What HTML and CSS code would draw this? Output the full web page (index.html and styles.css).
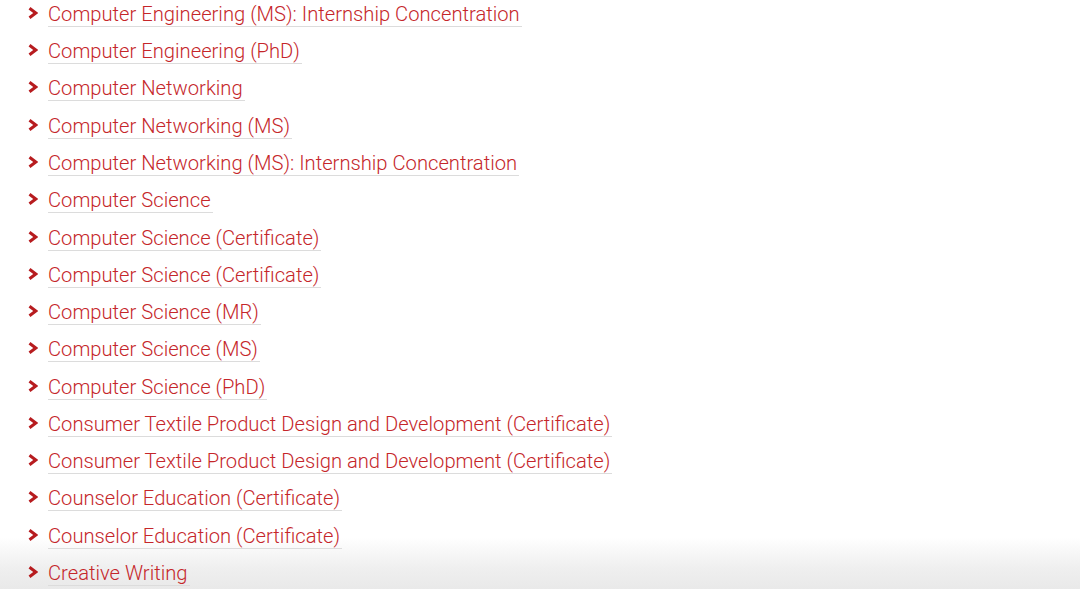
FILE: index.html
```html
<!DOCTYPE html>
<html lang="en">
<head>
    <meta charset="UTF-8">
    <title>Programs</title>
    <link rel="stylesheet" href="styles.css">
</head>
<body>

<ul class="program-list">
    <li><svg class="chevron" viewBox="0 0 10 12"><polyline points="1.5,1.2 7.8,6 1.5,10.8"/></svg><a href="#">Computer Engineering (MS): Internship Concentration</a></li>
    <li><svg class="chevron" viewBox="0 0 10 12"><polyline points="1.5,1.2 7.8,6 1.5,10.8"/></svg><a href="#">Computer Engineering (PhD)</a></li>
    <li><svg class="chevron" viewBox="0 0 10 12"><polyline points="1.5,1.2 7.8,6 1.5,10.8"/></svg><a href="#">Computer Networking</a></li>
    <li><svg class="chevron" viewBox="0 0 10 12"><polyline points="1.5,1.2 7.8,6 1.5,10.8"/></svg><a href="#">Computer Networking (MS)</a></li>
    <li><svg class="chevron" viewBox="0 0 10 12"><polyline points="1.5,1.2 7.8,6 1.5,10.8"/></svg><a href="#">Computer Networking (MS): Internship Concentration</a></li>
    <li><svg class="chevron" viewBox="0 0 10 12"><polyline points="1.5,1.2 7.8,6 1.5,10.8"/></svg><a href="#">Computer Science</a></li>
    <li><svg class="chevron" viewBox="0 0 10 12"><polyline points="1.5,1.2 7.8,6 1.5,10.8"/></svg><a href="#">Computer Science (Certificate)</a></li>
    <li><svg class="chevron" viewBox="0 0 10 12"><polyline points="1.5,1.2 7.8,6 1.5,10.8"/></svg><a href="#">Computer Science (Certificate)</a></li>
    <li><svg class="chevron" viewBox="0 0 10 12"><polyline points="1.5,1.2 7.8,6 1.5,10.8"/></svg><a href="#">Computer Science (MR)</a></li>
    <li><svg class="chevron" viewBox="0 0 10 12"><polyline points="1.5,1.2 7.8,6 1.5,10.8"/></svg><a href="#">Computer Science (MS)</a></li>
    <li><svg class="chevron" viewBox="0 0 10 12"><polyline points="1.5,1.2 7.8,6 1.5,10.8"/></svg><a href="#">Computer Science (PhD)</a></li>
    <li><svg class="chevron" viewBox="0 0 10 12"><polyline points="1.5,1.2 7.8,6 1.5,10.8"/></svg><a href="#">Consumer Textile Product Design and Development (Certificate)</a></li>
    <li><svg class="chevron" viewBox="0 0 10 12"><polyline points="1.5,1.2 7.8,6 1.5,10.8"/></svg><a href="#">Consumer Textile Product Design and Development (Certificate)</a></li>
    <li><svg class="chevron" viewBox="0 0 10 12"><polyline points="1.5,1.2 7.8,6 1.5,10.8"/></svg><a href="#">Counselor Education (Certificate)</a></li>
    <li><svg class="chevron" viewBox="0 0 10 12"><polyline points="1.5,1.2 7.8,6 1.5,10.8"/></svg><a href="#">Counselor Education (Certificate)</a></li>
    <li><svg class="chevron" viewBox="0 0 10 12"><polyline points="1.5,1.2 7.8,6 1.5,10.8"/></svg><a href="#">Creative Writing</a></li>
</ul>

</body>
</html>
```

FILE: styles.css
```css
html {
    height: 100%;
}
body {
    margin: 0;
    height: 100%;
    /* soft grey fade along the bottom edge */
    background: #fff linear-gradient(to bottom, rgba(240, 240, 240, 0), #efefef 60%, #e9e9e9) no-repeat left bottom / 100% 52px;
    font-family: 'Roboto', 'Liberation Sans', sans-serif;
    overflow: hidden; /* screenshot crop */
}
.program-list {
    list-style: none;
    margin: -5.2px 0 0 0;
    padding: 0 0 0 28px;
}
.program-list li {
    display: flex;
    align-items: center;
    height: 37.27px;
}
.chevron {
    flex: none;
    width: 10px;
    height: 12px;
    margin: -1px 10px 0 0;
    fill: none;
    stroke: #b71c1f;
    stroke-width: 3;
}
.program-list a {
    color: #c5262a;
    font-size: 20.2px;
    font-weight: 300;
    line-height: 22px;
    text-decoration: none;
    border-bottom: 1px solid #dcdcdc;
    padding: 0 2px 1px 0;
    margin-top: 3px;
}
```
